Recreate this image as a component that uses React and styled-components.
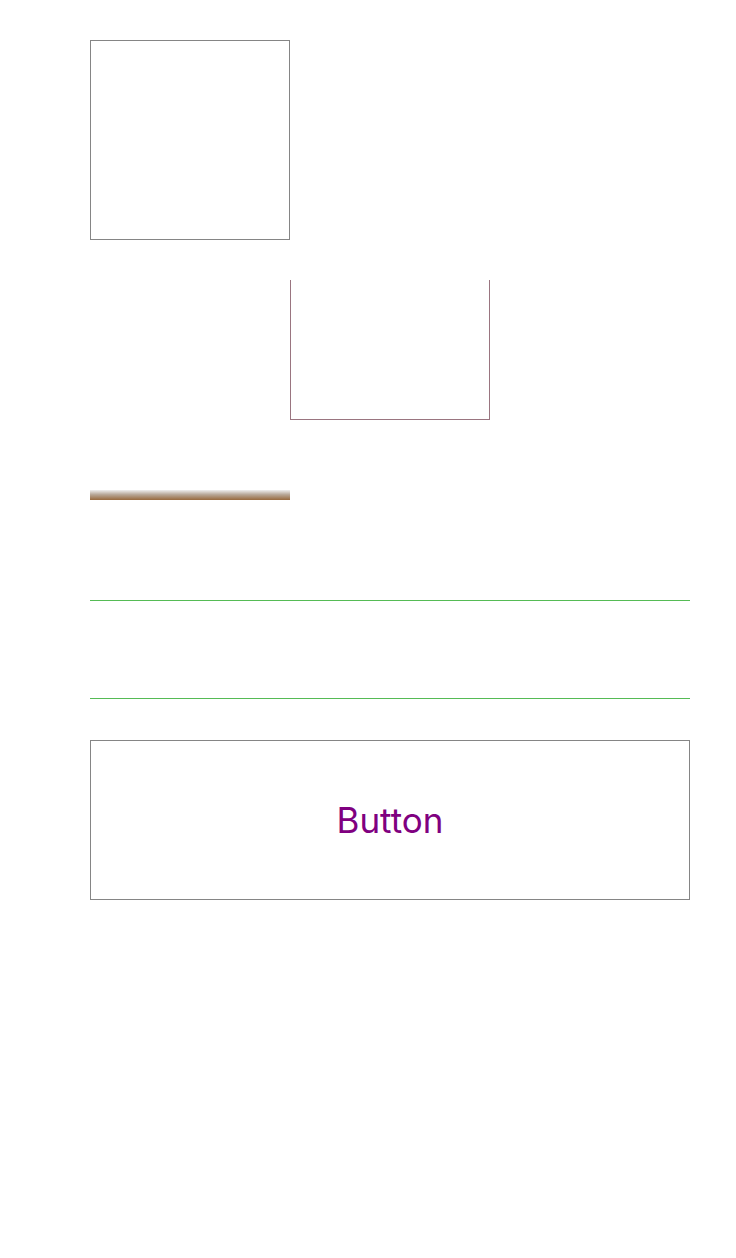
import React from "react";
import styled, { createGlobalStyle } from "styled-components";

const Global = createGlobalStyle`
  html, body { margin: 0; padding: 0; background: #ffffff; }
  body { font-family: Inter, "Noto Sans", sans-serif; }
`;

const Page = styled.div`
  width: 600px;
  margin-left: 90px;
  padding-top: 40px;
  display: flex;
  flex-direction: column;
  align-items: flex-start;
`;

const Square = styled.div`
  width: 200px;
  height: 200px;
  box-sizing: border-box;
  border: 1px solid #858585;
`;

const OpenBox = styled.div`
  margin-top: 40px;
  margin-left: 200px;
  width: 200px;
  height: 140px;
  box-sizing: border-box;
  border: 1px solid #9a7580;
  border-top: none;
`;

const GradientBar = styled.div`
  margin-top: 70px;
  width: 200px;
  height: 10px;
  background: linear-gradient(to bottom, #eeeeee 0%, #b8a898 45%, #98693d 100%);
`;

const Band = styled.div`
  margin-top: 100px;
  width: 600px;
  height: 99px;
  box-sizing: border-box;
  border-top: 1px solid #55bb55;
  border-bottom: 1px solid #55bb55;
`;

const Button = styled.button`
  margin-top: 41px;
  width: 600px;
  height: 160px;
  box-sizing: border-box;
  border: 1px solid #858585;
  background: #ffffff;
  color: #800080;
  font-family: Inter, "Noto Sans", sans-serif;
  font-size: 35px;
  display: flex;
  align-items: center;
  justify-content: center;
  padding: 0;
`;

export default function App() {
  return (
    <>
      <Global />
      <Page>
        <Square />
        <OpenBox />
        <GradientBar />
        <Band />
        <Button>Button</Button>
      </Page>
    </>
  );
}
